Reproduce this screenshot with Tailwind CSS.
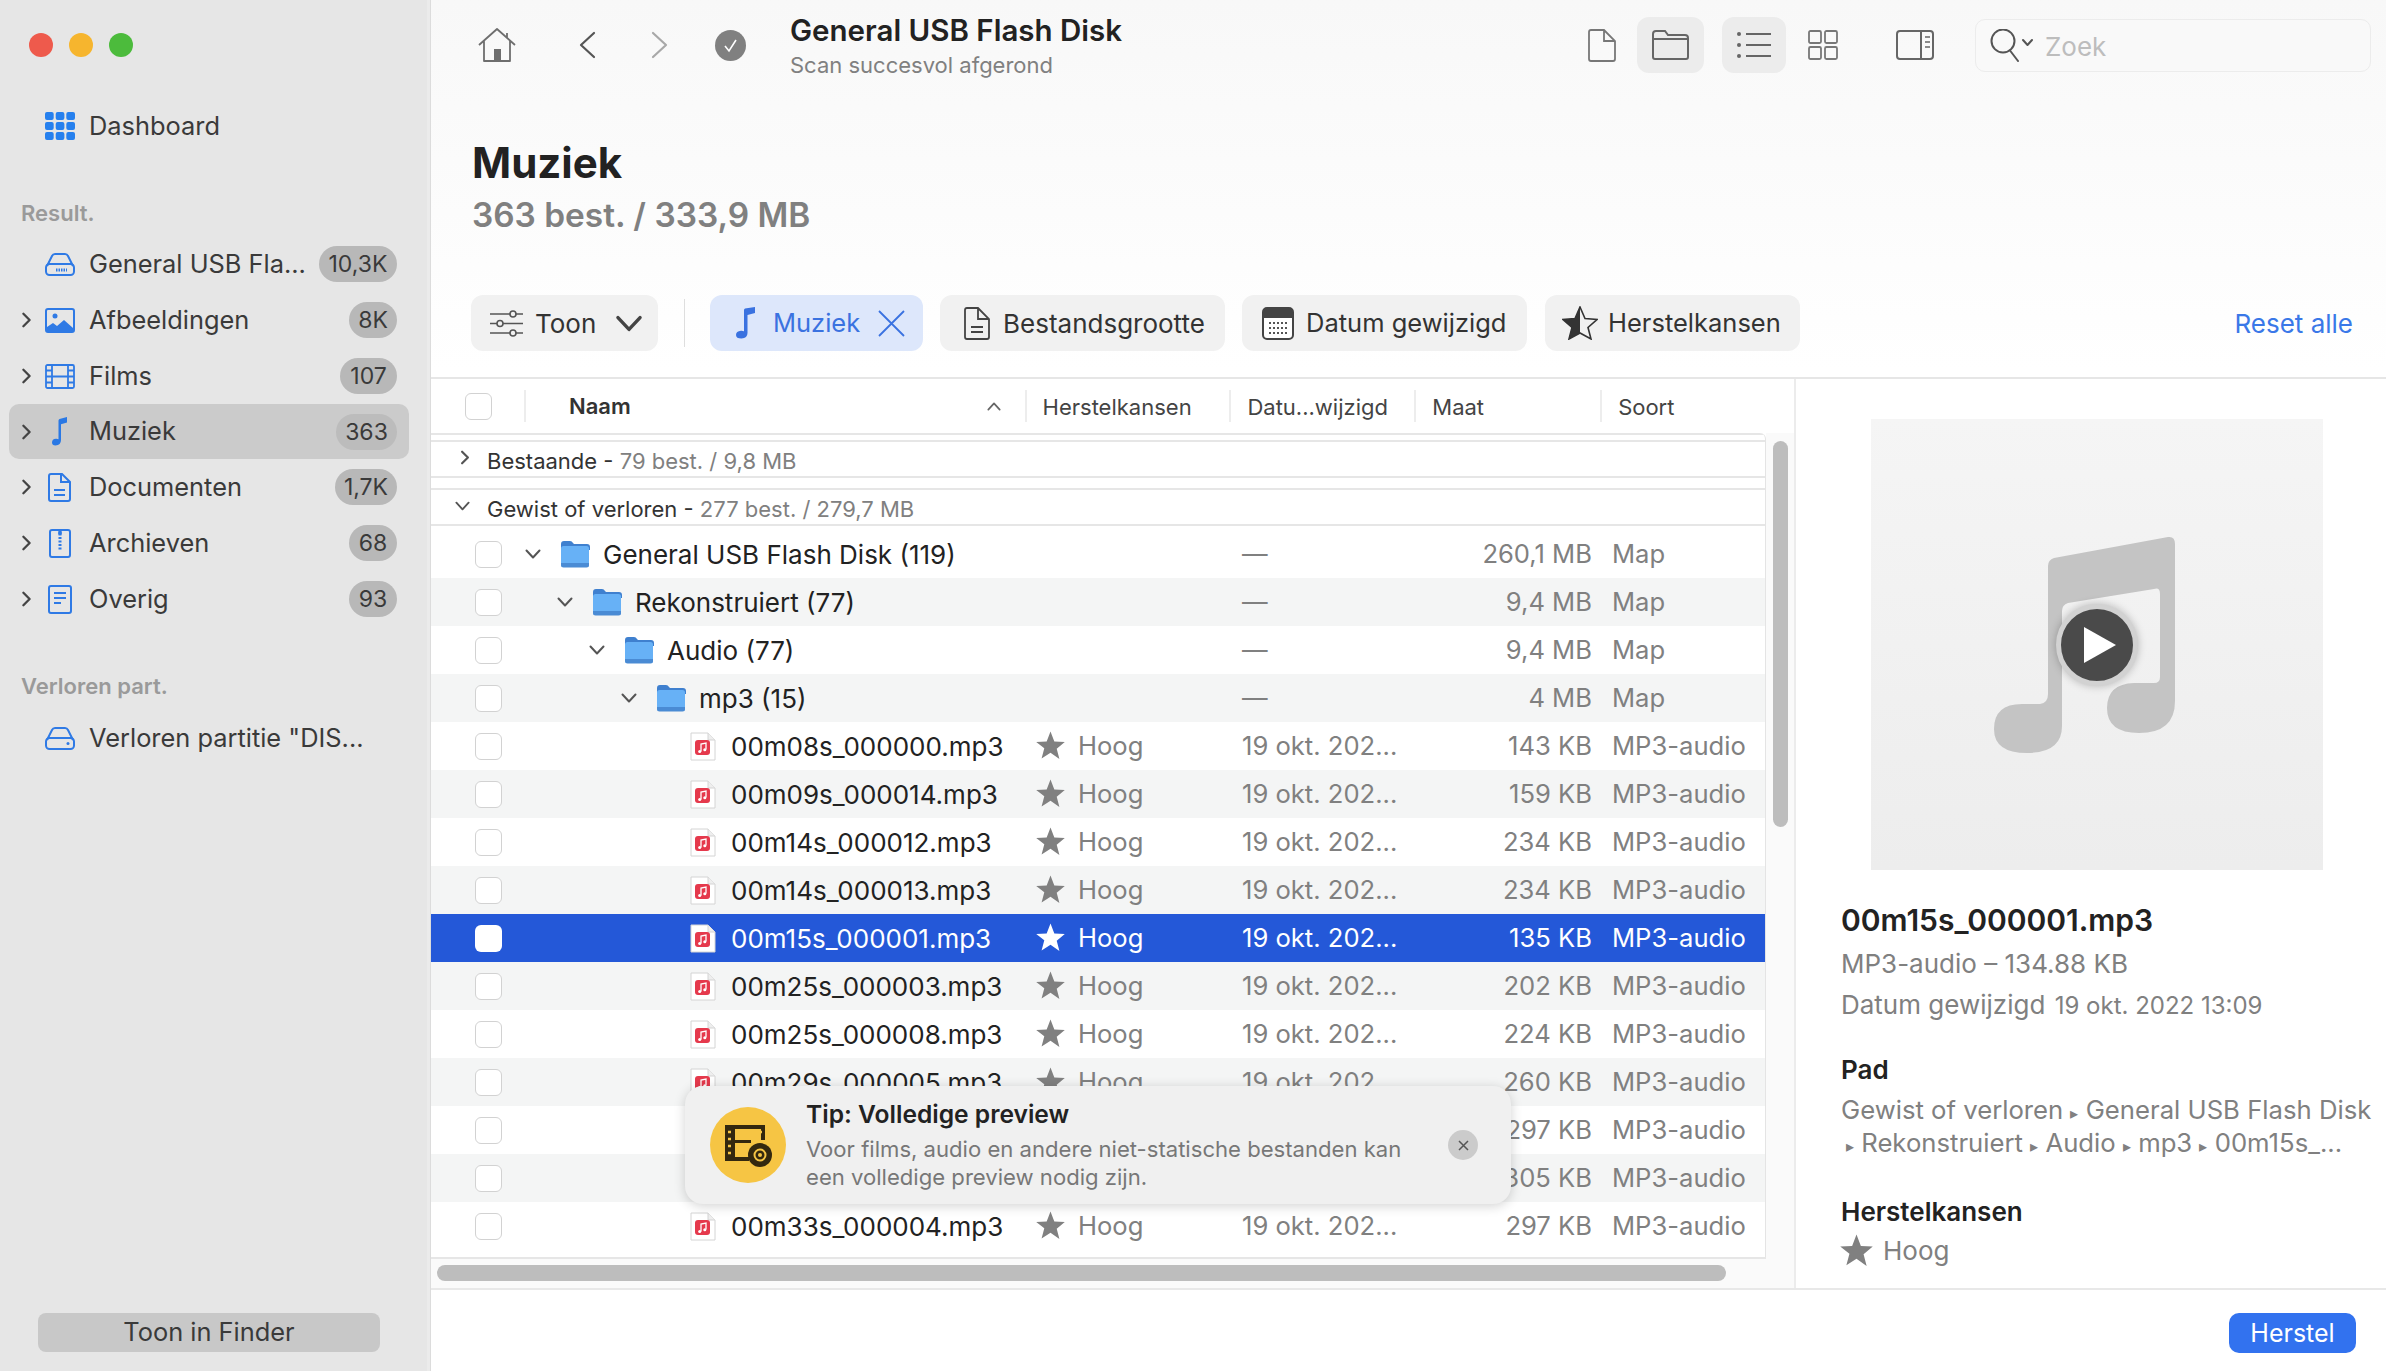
<!DOCTYPE html>
<html lang="nl">
<head>
    <meta charset="UTF-8">
    <title>Muziek - General USB Flash Disk</title>
    <script src="https://cdn.jsdelivr.net/npm/@tailwindcss/browser@4"></script>
</head>
<body class="[font-family:Inter,'Noto_Sans',sans-serif] text-[#222] bg-white overflow-hidden">

<!-- shared icons -->
<svg class="hidden">
    <symbol id="chev-r" viewBox="0 0 12 18"><path d="M2.5 2l7 7-7 7" fill="none" stroke="currentColor" stroke-width="2.600" stroke-linecap="round" stroke-linejoin="round"/></symbol>
    <symbol id="chev-d" viewBox="0 0 16 10"><path d="M1.5 1.5L8 8.5l6.500-7" fill="none" stroke="currentColor" stroke-width="2" stroke-linecap="round" stroke-linejoin="round"/></symbol>
    <symbol id="star" viewBox="0 0 28 28"><path d="M14 0.500l3.700 9.600 10.100.600-7.800 6.500 2.600 9.900L14 21.100l-8.600 5.500 2.600-9.900L.2 10.700l10.100-.6z" fill="currentColor"/></symbol>
    <symbol id="folder" viewBox="0 0 30 28"><path d="M1 4q0-3 3-3h6q2 0 3 2l1 1h13q3 0 3 3v3H1z" fill="#3f80cf"/><rect x="1" y="6" width="28" height="21" rx="2.500" fill="#67b1f6"/><path d="M1 23h28v2q0 2.500-2.500 2.500h-23q-2.500 0-2.500-2.500z" fill="#4a8bd4"/></symbol>
    <symbol id="file" viewBox="0 0 26 29"><path d="M1 1h17l7 7v20H1z" fill="#fff" stroke="#d4d4d4"/><path d="M18 1v7h7" fill="#eee" stroke="#d4d4d4"/><rect x="5" y="8" width="15" height="15" rx="3" fill="#e5394c"/><path d="M11 19.500v-7.500l5-1v6.500" fill="none" stroke="#fff" stroke-width="1.300"/><circle cx="9.700" cy="19.500" r="1.500" fill="#fff"/><circle cx="14.800" cy="17.700" r="1.500" fill="#fff"/></symbol>
</svg>

<div class="flex w-[2386px] h-[1371px] overflow-hidden">

    <!-- Sidebar -->
    <aside class="w-[430px] shrink-0 bg-[#e6e6e6] border-r-[3px] border-[#ebebeb] flex flex-col text-[25.4px] text-[#3a3a3a]">
        <div class="flex gap-[16px] pl-[29px] pt-[33px] h-[98px]">
            <span class="w-[24px] h-[24px] rounded-full bg-[#ee5a4c]"></span>
            <span class="w-[24px] h-[24px] rounded-full bg-[#f6b52e]"></span>
            <span class="w-[24px] h-[24px] rounded-full bg-[#4cbb3c]"></span>
        </div>
        <div class="flex items-center h-[56px] pl-[45px]">
            <svg class="w-[30px] h-[28px] mr-[14px]" viewBox="0 0 30 28" fill="#2680ee"><rect width="8.700" height="8" rx="2"/><rect x="10.700" width="8.700" height="8" rx="2"/><rect x="21.300" width="8.700" height="8" rx="2"/><rect y="10" width="8.700" height="8" rx="2"/><rect x="10.700" y="10" width="8.700" height="8" rx="2"/><rect x="21.300" y="10" width="8.700" height="8" rx="2"/><rect y="20" width="8.700" height="8" rx="2"/><rect x="10.700" y="20" width="8.700" height="8" rx="2"/><rect x="21.300" y="20" width="8.700" height="8" rx="2"/></svg>
            Dashboard
        </div>

        <div class="pl-[21px] mt-[41px] h-[36px] leading-[36px] text-[22px] font-semibold text-[#9a9a9a]">Result.</div>

        <div class="mt-[5px] flex flex-col">
            <div class="flex items-center h-[56px] pl-[45px] pr-[30px]">
                <svg class="w-[30px] h-[23px] mr-[14px]" viewBox="0 0 30 23" fill="none" stroke="#2f7ae5" stroke-width="2"><path d="M2 13L7 3q1-2 3-2h10q2 0 3 2l5 10"/><rect x="1" y="11" width="28" height="11" rx="3.500"/><path d="M11 17h11" stroke-width="3" stroke-dasharray="1.500 1"/></svg>
                <span>General USB Fla...</span>
                <span class="ml-auto h-[36px] w-[78px] rounded-full bg-[#b8b8b8] text-[23px] leading-[36px] text-center">10,3K</span>
            </div>
            <div class="flex items-center h-[56px] pl-[21px] pr-[30px]">
                <svg class="w-[11px] h-[16px] mr-[13px] text-[#444]"><use href="#chev-r"/></svg>
                <svg class="w-[30px] h-[25px] mr-[14px]" viewBox="0 0 30 25" fill="none" stroke="#2f7ae5" stroke-width="2"><rect x="1" y="1" width="28" height="23" rx="2"/><circle cx="10" cy="8" r="2.500" fill="#2f7ae5" stroke="none"/><path d="M2 23v-4l6-4 4 3 7-6 9 8v3z" fill="#2f7ae5" stroke="none"/></svg>
                <span>Afbeeldingen</span>
                <span class="ml-auto h-[36px] w-[48px] rounded-full bg-[#b8b8b8] text-[23px] leading-[36px] text-center">8K</span>
            </div>
            <div class="flex items-center h-[56px] pl-[21px] pr-[30px]">
                <svg class="w-[11px] h-[16px] mr-[13px] text-[#444]"><use href="#chev-r"/></svg>
                <svg class="w-[30px] h-[25px] mr-[14px]" viewBox="0 0 30 25" fill="none" stroke="#2f7ae5" stroke-width="1.800"><rect x="1" y="1" width="28" height="23" rx="1.500"/><path d="M7 1v23M23 1v23M1 6.500h6M1 12.500h28M1 18.500h6M23 6.500h6M23 18.500h6"/></svg>
                <span>Films</span>
                <span class="ml-auto h-[36px] w-[57px] rounded-full bg-[#b8b8b8] text-[23px] leading-[36px] text-center">107</span>
            </div>
            <div class="flex items-center h-[55px] ml-[9px] mr-[18px] pl-[12px] pr-[12px] rounded-[10px] bg-[#cbcbcb]">
                <svg class="w-[11px] h-[16px] mr-[13px] text-[#444]"><use href="#chev-r"/></svg>
                <svg class="w-[30px] h-[29px] mr-[14px]" viewBox="0 0 30 29" fill="#2a78e4"><path d="M13.500 3.500q0-1 1-1.500L22 0v5.500l-6 1.700V23q0 5-5.500 5.500Q7 28.500 7 25.500q0-3.500 4-3.700 1.500-.1 2.500.4z"/></svg>
                <span>Muziek</span>
                <span class="ml-auto h-[36px] w-[61px] rounded-full bg-[#bcbcbc] text-[23px] leading-[36px] text-center">363</span>
            </div>
            <div class="flex items-center h-[56px] pl-[21px] pr-[30px]">
                <svg class="w-[11px] h-[16px] mr-[13px] text-[#444]"><use href="#chev-r"/></svg>
                <svg class="w-[30px] h-[29px] mr-[14px]" viewBox="0 0 30 29" fill="none" stroke="#2f7ae5" stroke-width="2"><path d="M6 1h11l8 8v17q0 2-2 2H6q-2 0-2-2V3q0-2 2-2zM16 1v8h9M9 17h11M9 22h11"/></svg>
                <span>Documenten</span>
                <span class="ml-auto h-[36px] w-[62px] rounded-full bg-[#b8b8b8] text-[23px] leading-[36px] text-center">1,7K</span>
            </div>
            <div class="flex items-center h-[56px] pl-[21px] pr-[30px]">
                <svg class="w-[11px] h-[16px] mr-[13px] text-[#444]"><use href="#chev-r"/></svg>
                <svg class="w-[30px] h-[29px] mr-[14px]" viewBox="0 0 30 29" fill="none" stroke="#2f7ae5" stroke-width="2"><rect x="5" y="1" width="20" height="27" rx="2"/><path d="M15 1v21" stroke-width="3" stroke-dasharray="2 1.500"/><circle cx="15" cy="4" r="2" fill="#2f7ae5" stroke="none"/></svg>
                <span>Archieven</span>
                <span class="ml-auto h-[36px] w-[48px] rounded-full bg-[#b8b8b8] text-[23px] leading-[36px] text-center">68</span>
            </div>
            <div class="flex items-center h-[56px] pl-[21px] pr-[30px]">
                <svg class="w-[11px] h-[16px] mr-[13px] text-[#444]"><use href="#chev-r"/></svg>
                <svg class="w-[30px] h-[29px] mr-[14px]" viewBox="0 0 30 29" fill="none" stroke="#2f7ae5" stroke-width="2"><rect x="4" y="1" width="22" height="27" rx="2"/><path d="M9 8h12M9 13h12M9 18h7"/></svg>
                <span>Overig</span>
                <span class="ml-auto h-[36px] w-[48px] rounded-full bg-[#b8b8b8] text-[23px] leading-[36px] text-center">93</span>
            </div>
        </div>

        <div class="pl-[21px] mt-[41px] h-[36px] leading-[36px] text-[22px] font-semibold text-[#9a9a9a]">Verloren part.</div>
        <div class="flex items-center h-[56px] pl-[45px] mt-[6px]">
            <svg class="w-[30px] h-[23px] mr-[14px]" viewBox="0 0 30 23" fill="none" stroke="#2f7ae5" stroke-width="2"><path d="M2 13L7 3q1-2 3-2h10q2 0 3 2l5 10"/><rect x="1" y="11" width="28" height="11" rx="3.500"/><circle cx="23" cy="16.500" r="1.500" fill="#2f7ae5" stroke="none"/></svg>
            <span>Verloren partitie "DIS...</span>
        </div>

        <div class="mt-auto mb-[19px] ml-[38px] w-[342px] h-[39px] rounded-[8px] bg-[#c8c8c8] text-center text-[25.4px] leading-[38px]">Toon in Finder</div>
    </aside>

    <!-- Main -->
    <main class="flex-1 flex flex-col border-l border-[#dcdcdc] bg-gradient-to-b from-[#f8f8f8] to-white to-[27%] relative">

        <!-- Toolbar -->
        <div class="flex items-center h-[90px] shrink-0 text-[#6e6e6e]">
            <svg class="ml-[47px] w-[38px] h-[34px]" viewBox="0 0 38 34" fill="none" stroke="currentColor" stroke-width="1.800" stroke-linejoin="round"><path d="M1 17L19 1l18 16M6 13v20h26V13M29 5v5"/><rect x="16" y="21" width="7" height="12" fill="currentColor" stroke="none"/></svg>
            <svg class="ml-[62px] w-[18px] h-[28px]" viewBox="0 0 18 28" fill="none" stroke="#555" stroke-width="2.200" stroke-linecap="round" stroke-linejoin="round"><path d="M16 2L3 14l13 12"/></svg>
            <svg class="ml-[55px] w-[18px] h-[28px]" viewBox="0 0 18 28" fill="none" stroke="#a8a8a8" stroke-width="2.200" stroke-linecap="round" stroke-linejoin="round"><path d="M2 2l13 12L2 26"/></svg>
            <svg class="ml-[46px] w-[31px] h-[31px]" viewBox="0 0 31 31"><circle cx="15.500" cy="15.500" r="15.500" fill="#808080"/><path d="M10 16l4 5 7-11" fill="none" stroke="#fff" stroke-width="1.600"/></svg>
            <div class="ml-[44px] flex flex-col">
                <div class="text-[29.5px] font-semibold leading-[36px] text-[#222]">General USB Flash Disk</div>
                <div class="text-[22px] leading-[28px] text-[#808080] mt-[3px]">Scan succesvol afgerond</div>
            </div>

            <svg class="ml-auto w-[28px] h-[33px]" viewBox="0 0 28 33" fill="none" stroke="#777" stroke-width="1.800"><path d="M3 1h13l11 11v18q0 2-2 2H3q-2 0-2-2V3q0-2 2-2zM16 1v11h11"/></svg>
            <div class="ml-[21px] w-[67px] h-[56px] rounded-[12px] bg-[#ececec] flex items-center justify-center">
                <svg class="w-[37px] h-[30px]" viewBox="0 0 37 30" fill="none" stroke="#666" stroke-width="2"><path d="M1 9V4q0-3 3-3h9l3 4h17q3 0 3 3v19q0 2-2 2H3q-2 0-2-2V9h35"/></svg>
            </div>
            <div class="ml-[18px] w-[64px] h-[56px] rounded-[12px] bg-[#ececec] flex items-center justify-center">
                <svg class="w-[34px] h-[28px]" viewBox="0 0 34 28" fill="#666"><circle cx="2" cy="3" r="2"/><circle cx="2" cy="14" r="2"/><circle cx="2" cy="25" r="2"/><rect x="9" y="2" width="25" height="2"/><rect x="9" y="13" width="25" height="2"/><rect x="9" y="24" width="25" height="2"/></svg>
            </div>
            <svg class="ml-[22px] w-[30px] h-[30px]" viewBox="0 0 30 30" fill="none" stroke="#777" stroke-width="1.800"><rect x="1" y="1" width="12" height="12" rx="1.500"/><rect x="17" y="1" width="12" height="12" rx="1.500"/><rect x="1" y="17" width="12" height="12" rx="1.500"/><rect x="17" y="17" width="12" height="12" rx="1.500"/></svg>
            <svg class="ml-[58px] w-[38px] h-[30px]" viewBox="0 0 38 30" fill="none" stroke="#666" stroke-width="2"><rect x="1" y="1" width="36" height="28" rx="3"/><path d="M25 1v28" /><path d="M29 7h5M29 12h5M29 17h5" stroke-width="1.500"/></svg>
            <div class="ml-[41px] mr-[15px] w-[396px] h-[53px] rounded-[10px] border border-[#ececec] bg-[#f9f9f9] flex items-center pl-[14px]">
                <svg class="w-[46px] h-[33px]" viewBox="0 0 46 33" fill="none" stroke="#555" stroke-width="2" stroke-linecap="round" stroke-linejoin="round"><circle cx="13" cy="12" r="11.500"/><path d="M20 21.500l8 10.500M33 11l4.500 5 4.500-5"/></svg>
                <span class="ml-[9px] mt-[2px] text-[26px] text-[#bdbdbd]">Zoek</span>
            </div>
        </div>

        <!-- Heading -->
        <h1 class="ml-[41px] mt-[48px] text-[42px] leading-[50px] font-bold text-[#222]">Muziek</h1>
        <div class="ml-[41px] mt-[7px] text-[33.400px] leading-[40px] font-semibold text-[#808080]">363 best. / 333,9 MB</div>

        <!-- Filter bar -->
        <div class="flex items-center h-[56px] mt-[60px] mb-[26px] text-[26px] text-[#333] shrink-0">
            <div class="ml-[40px] w-[187px] h-full rounded-[12px] bg-[#f1f1f1] flex items-center pl-[19px]">
                <svg class="w-[33px] h-[27px]" viewBox="0 0 33 27" fill="none" stroke="#555" stroke-width="1.600"><path d="M0 4h20M26 4h7M0 13.500h7M13 13.500h20M0 23h20M26 23h7"/><circle cx="23" cy="4" r="3"/><circle cx="10" cy="13.500" r="3"/><circle cx="23" cy="23" r="3"/></svg>
                <span class="ml-[12px]">Toon</span>
                <svg class="ml-[19px] w-[28px] h-[17px] text-[#444]"><use href="#chev-d"/></svg>
            </div>
            <span class="ml-[26px] w-px h-[48px] bg-[#dedede]"></span>
            <div class="ml-[25px] w-[213px] h-full rounded-[12px] bg-[#dde7fb] text-[#3a72e0] flex items-center pl-[25px]">
                <svg class="w-[22px] h-[32px]" viewBox="0 0 22 32" fill="#3a72e0"><path d="M9 3q0-1 1-1.500L20 0v6l-7.500 2v18q0 5-6 5.500Q1 31.500 1 28q0-4 5-4.300 1.500-.1 3 .5z"/></svg>
                <span class="ml-[16px] text-[25.500px]">Muziek</span>
                <svg class="ml-[18px] w-[27px] h-[27px]" viewBox="0 0 27 27" fill="none" stroke="#3a72e0" stroke-width="1.800"><path d="M1 1l25 25M26 1L1 26"/></svg>
            </div>
            <div class="ml-[17px] w-[285px] h-full rounded-[12px] bg-[#f1f1f1] flex items-center pl-[24px]">
                <svg class="w-[26px] h-[33px]" viewBox="0 0 26 33" fill="none" stroke="#444" stroke-width="1.800"><path d="M3 1h11l11 11v18q0 2-2 2H3q-2 0-2-2V3q0-2 2-2zM14 1v11h11M7 20h12M7 25h12"/></svg>
                <span class="ml-[13px]">Bestandsgrootte</span>
            </div>
            <div class="ml-[17px] w-[285px] h-full rounded-[12px] bg-[#f1f1f1] flex items-center pl-[20px]">
                <svg class="w-[32px] h-[33px]" viewBox="0 0 32 33"><rect x="1" y="1" width="30" height="31" rx="4" fill="#fff" stroke="#444" stroke-width="2"/><path d="M1 5q0-4 4-4h22q4 0 4 4v6H1z" fill="#444"/><path d="M7 16h18M7 21h18M7 26h18" stroke="#555" stroke-width="2" stroke-dasharray="2 2" fill="none"/></svg>
                <span class="ml-[12px] text-[25.500px]">Datum gewijzigd</span>
            </div>
            <div class="ml-[18px] w-[255px] h-full rounded-[12px] bg-[#f1f1f1] flex items-center pl-[17px]">
                <svg class="w-[36px] h-[34px]" viewBox="0 0 36 34"><path d="M18 1l5 11.500 12 1-9 8 3 11.500-11-6-11 6 3-11.500-9-8 12-1z" fill="none" stroke="#333" stroke-width="1.600"/><path d="M18 1v26l-11 6 3-11.500-9-8 12-1z" fill="#333"/></svg>
                <span class="ml-[10px] text-[25.500px]">Herstelkansen</span>
            </div>
            <span class="ml-auto mr-[33px] text-[#3a78e8]">Reset alle</span>
        </div>

        <div class="flex-1 min-h-0 flex border-t-2 border-[#e6e6e6]">

            <!-- File list -->
            <section class="w-[1365px] shrink-0 flex flex-col border-r-2 border-[#ececec] relative">
                <!-- Column headers -->
                <div class="flex items-center h-[54px] shrink-0 text-[22px] text-[#444]">
                    <div class="w-[93px] flex items-center">
                        <span class="ml-[34px] w-[27px] h-[27px] rounded-[6px] border border-[#d2d2d2] bg-white"></span>
                    </div>
                    <div class="w-[501px] h-[32px] border-l-2 border-[#ededed] flex items-center justify-between pl-[43px] pr-[24px]">
                        <span class="font-semibold text-[#333]">Naam</span>
                        <svg class="w-[14px] h-[9px] text-[#666] rotate-180"><use href="#chev-d"/></svg>
                    </div>
                    <div class="w-[205px] h-[32px] border-l-2 border-[#ededed] pl-[16px] leading-[34px]">Herstelkansen</div>
                    <div class="w-[185px] h-[32px] border-l-2 border-[#ededed] pl-[16px] leading-[34px]">Datu...wijzigd</div>
                    <div class="w-[186px] h-[32px] border-l-2 border-[#ededed] pl-[16px] leading-[34px]">Maat</div>
                    <div class="w-[194px] h-[32px] border-l-2 border-[#ededed] pl-[16px] leading-[34px]">Soort</div>
                </div>

                <div class="flex-1 min-h-0 flex">
                    <div class="w-[1335px] shrink-0 flex flex-col">
                        <div class="h-[824px] shrink-0 border-r border-[#e4e4e4] rounded-tr-[6px] flex flex-col text-[25.600px] overflow-hidden">
                            <!-- Groups -->
                            <div class="h-[7px] shrink-0 border-t-2 border-[#e6e6e6]"></div>
                            <div class="flex items-center h-[38px] shrink-0 border-y-2 border-[#e6e6e6] pt-[4px] text-[22px] text-[#333]">
                                <svg class="ml-[29px] w-[10px] h-[15px] text-[#555] -mt-[8px]"><use href="#chev-r"/></svg>
                                <span class="ml-[17px]">Bestaande - <span class="text-[#808080]">79 best. / 9,8 MB</span></span>
                            </div>
                            <div class="h-[10px] shrink-0"></div>
                            <div class="flex items-center h-[38px] shrink-0 border-y-2 border-[#e6e6e6] pt-[4px] text-[22px] text-[#333]">
                                <svg class="ml-[24px] w-[15px] h-[10px] text-[#555] -mt-[6px]"><use href="#chev-d"/></svg>
                                <span class="ml-[17px]">Gewist of verloren - <span class="text-[#808080]">277 best. / 279,7 MB</span></span>
                            </div>
                            <div class="h-[4px] shrink-0"></div>

                            <!-- Rows -->
                            <div class="flex items-center h-[48px] shrink-0 text-[#808080]">
                                <div class="w-[606px] flex items-center text-[26px] text-[#222]">
                                    <span class="ml-[44px] w-[27px] h-[27px] rounded-[6px] border border-[#d2d2d2] bg-white shrink-0"></span>
                                    <svg class="ml-[23px] w-[16px] h-[10px] text-[#555]"><use href="#chev-d"/></svg>
                                    <svg class="ml-[19px] w-[30px] h-[28px]"><use href="#folder"/></svg>
                                    <span class="ml-[13px]">General USB Flash Disk (119)</span>
                                </div>
                                <div class="w-[205px]"></div>
                                <div class="w-[200px]">—</div>
                                <div class="w-[150px] text-right">260,1 MB</div>
                                <div class="ml-[20px]">Map</div>
                            </div>
                            <div class="flex items-center h-[48px] shrink-0 text-[#808080] bg-[#f4f5f5]">
                                <div class="w-[606px] flex items-center text-[26px] text-[#222]">
                                    <span class="ml-[44px] w-[27px] h-[27px] rounded-[6px] border border-[#d2d2d2] bg-white shrink-0"></span>
                                    <svg class="ml-[55px] w-[16px] h-[10px] text-[#555]"><use href="#chev-d"/></svg>
                                    <svg class="ml-[19px] w-[30px] h-[28px]"><use href="#folder"/></svg>
                                    <span class="ml-[13px]">Rekonstruiert (77)</span>
                                </div>
                                <div class="w-[205px]"></div>
                                <div class="w-[200px]">—</div>
                                <div class="w-[150px] text-right">9,4 MB</div>
                                <div class="ml-[20px]">Map</div>
                            </div>
                            <div class="flex items-center h-[48px] shrink-0 text-[#808080]">
                                <div class="w-[606px] flex items-center text-[26px] text-[#222]">
                                    <span class="ml-[44px] w-[27px] h-[27px] rounded-[6px] border border-[#d2d2d2] bg-white shrink-0"></span>
                                    <svg class="ml-[87px] w-[16px] h-[10px] text-[#555]"><use href="#chev-d"/></svg>
                                    <svg class="ml-[19px] w-[30px] h-[28px]"><use href="#folder"/></svg>
                                    <span class="ml-[13px]">Audio (77)</span>
                                </div>
                                <div class="w-[205px]"></div>
                                <div class="w-[200px]">—</div>
                                <div class="w-[150px] text-right">9,4 MB</div>
                                <div class="ml-[20px]">Map</div>
                            </div>
                            <div class="flex items-center h-[48px] shrink-0 text-[#808080] bg-[#f4f5f5]">
                                <div class="w-[606px] flex items-center text-[26px] text-[#222]">
                                    <span class="ml-[44px] w-[27px] h-[27px] rounded-[6px] border border-[#d2d2d2] bg-white shrink-0"></span>
                                    <svg class="ml-[119px] w-[16px] h-[10px] text-[#555]"><use href="#chev-d"/></svg>
                                    <svg class="ml-[19px] w-[30px] h-[28px]"><use href="#folder"/></svg>
                                    <span class="ml-[13px]">mp3 (15)</span>
                                </div>
                                <div class="w-[205px]"></div>
                                <div class="w-[200px]">—</div>
                                <div class="w-[150px] text-right">4 MB</div>
                                <div class="ml-[20px]">Map</div>
                            </div>
                            <div class="flex items-center h-[48px] shrink-0 text-[#808080]">
                                <div class="w-[606px] flex items-center text-[26px] text-[#222]">
                                    <span class="ml-[44px] w-[27px] h-[27px] rounded-[6px] border border-[#d2d2d2] bg-white shrink-0"></span>
                                    <svg class="ml-[188px] w-[26px] h-[29px]"><use href="#file"/></svg>
                                    <span class="ml-[15px]">00m08s_000000.mp3</span>
                                </div>
                                <div class="w-[205px] flex items-center"><svg class="w-[29px] h-[29px] -ml-[1px]"><use href="#star"/></svg><span class="ml-[13px]">Hoog</span></div>
                                <div class="w-[200px]">19 okt. 202...</div>
                                <div class="w-[150px] text-right">143 KB</div>
                                <div class="ml-[20px]">MP3-audio</div>
                            </div>
                            <div class="flex items-center h-[48px] shrink-0 text-[#808080] bg-[#f4f5f5]">
                                <div class="w-[606px] flex items-center text-[26px] text-[#222]">
                                    <span class="ml-[44px] w-[27px] h-[27px] rounded-[6px] border border-[#d2d2d2] bg-white shrink-0"></span>
                                    <svg class="ml-[188px] w-[26px] h-[29px]"><use href="#file"/></svg>
                                    <span class="ml-[15px]">00m09s_000014.mp3</span>
                                </div>
                                <div class="w-[205px] flex items-center"><svg class="w-[29px] h-[29px] -ml-[1px]"><use href="#star"/></svg><span class="ml-[13px]">Hoog</span></div>
                                <div class="w-[200px]">19 okt. 202...</div>
                                <div class="w-[150px] text-right">159 KB</div>
                                <div class="ml-[20px]">MP3-audio</div>
                            </div>
                            <div class="flex items-center h-[48px] shrink-0 text-[#808080]">
                                <div class="w-[606px] flex items-center text-[26px] text-[#222]">
                                    <span class="ml-[44px] w-[27px] h-[27px] rounded-[6px] border border-[#d2d2d2] bg-white shrink-0"></span>
                                    <svg class="ml-[188px] w-[26px] h-[29px]"><use href="#file"/></svg>
                                    <span class="ml-[15px]">00m14s_000012.mp3</span>
                                </div>
                                <div class="w-[205px] flex items-center"><svg class="w-[29px] h-[29px] -ml-[1px]"><use href="#star"/></svg><span class="ml-[13px]">Hoog</span></div>
                                <div class="w-[200px]">19 okt. 202...</div>
                                <div class="w-[150px] text-right">234 KB</div>
                                <div class="ml-[20px]">MP3-audio</div>
                            </div>
                            <div class="flex items-center h-[48px] shrink-0 text-[#808080] bg-[#f4f5f5]">
                                <div class="w-[606px] flex items-center text-[26px] text-[#222]">
                                    <span class="ml-[44px] w-[27px] h-[27px] rounded-[6px] border border-[#d2d2d2] bg-white shrink-0"></span>
                                    <svg class="ml-[188px] w-[26px] h-[29px]"><use href="#file"/></svg>
                                    <span class="ml-[15px]">00m14s_000013.mp3</span>
                                </div>
                                <div class="w-[205px] flex items-center"><svg class="w-[29px] h-[29px] -ml-[1px]"><use href="#star"/></svg><span class="ml-[13px]">Hoog</span></div>
                                <div class="w-[200px]">19 okt. 202...</div>
                                <div class="w-[150px] text-right">234 KB</div>
                                <div class="ml-[20px]">MP3-audio</div>
                            </div>
                            <!-- selected row -->
                            <div class="flex items-center h-[48px] shrink-0 text-white bg-[#2458d8]">
                                <div class="w-[606px] flex items-center text-[26px]">
                                    <span class="ml-[44px] w-[27px] h-[27px] rounded-[6px] bg-white shrink-0"></span>
                                    <svg class="ml-[188px] w-[26px] h-[29px]"><use href="#file"/></svg>
                                    <span class="ml-[15px]">00m15s_000001.mp3</span>
                                </div>
                                <div class="w-[205px] flex items-center"><svg class="w-[29px] h-[29px] -ml-[1px]"><use href="#star"/></svg><span class="ml-[13px]">Hoog</span></div>
                                <div class="w-[200px]">19 okt. 202...</div>
                                <div class="w-[150px] text-right">135 KB</div>
                                <div class="ml-[20px]">MP3-audio</div>
                            </div>
                            <div class="flex items-center h-[48px] shrink-0 text-[#808080] bg-[#f4f5f5]">
                                <div class="w-[606px] flex items-center text-[26px] text-[#222]">
                                    <span class="ml-[44px] w-[27px] h-[27px] rounded-[6px] border border-[#d2d2d2] bg-white shrink-0"></span>
                                    <svg class="ml-[188px] w-[26px] h-[29px]"><use href="#file"/></svg>
                                    <span class="ml-[15px]">00m25s_000003.mp3</span>
                                </div>
                                <div class="w-[205px] flex items-center"><svg class="w-[29px] h-[29px] -ml-[1px]"><use href="#star"/></svg><span class="ml-[13px]">Hoog</span></div>
                                <div class="w-[200px]">19 okt. 202...</div>
                                <div class="w-[150px] text-right">202 KB</div>
                                <div class="ml-[20px]">MP3-audio</div>
                            </div>
                            <div class="flex items-center h-[48px] shrink-0 text-[#808080]">
                                <div class="w-[606px] flex items-center text-[26px] text-[#222]">
                                    <span class="ml-[44px] w-[27px] h-[27px] rounded-[6px] border border-[#d2d2d2] bg-white shrink-0"></span>
                                    <svg class="ml-[188px] w-[26px] h-[29px]"><use href="#file"/></svg>
                                    <span class="ml-[15px]">00m25s_000008.mp3</span>
                                </div>
                                <div class="w-[205px] flex items-center"><svg class="w-[29px] h-[29px] -ml-[1px]"><use href="#star"/></svg><span class="ml-[13px]">Hoog</span></div>
                                <div class="w-[200px]">19 okt. 202...</div>
                                <div class="w-[150px] text-right">224 KB</div>
                                <div class="ml-[20px]">MP3-audio</div>
                            </div>
                            <div class="flex items-center h-[48px] shrink-0 text-[#808080] bg-[#f4f5f5]">
                                <div class="w-[606px] flex items-center text-[26px] text-[#222]">
                                    <span class="ml-[44px] w-[27px] h-[27px] rounded-[6px] border border-[#d2d2d2] bg-white shrink-0"></span>
                                    <svg class="ml-[188px] w-[26px] h-[29px]"><use href="#file"/></svg>
                                    <span class="ml-[15px]">00m29s_000005.mp3</span>
                                </div>
                                <div class="w-[205px] flex items-center"><svg class="w-[29px] h-[29px] -ml-[1px]"><use href="#star"/></svg><span class="ml-[13px]">Hoog</span></div>
                                <div class="w-[200px]">19 okt. 202...</div>
                                <div class="w-[150px] text-right">260 KB</div>
                                <div class="ml-[20px]">MP3-audio</div>
                            </div>
                            <div class="flex items-center h-[48px] shrink-0 text-[#808080]">
                                <div class="w-[606px] flex items-center text-[#222]">
                                    <span class="ml-[44px] w-[27px] h-[27px] rounded-[6px] border border-[#d2d2d2] bg-white shrink-0"></span>
                                </div>
                                <div class="w-[205px]"></div>
                                <div class="w-[200px]"></div>
                                <div class="w-[150px] text-right">297 KB</div>
                                <div class="ml-[20px]">MP3-audio</div>
                            </div>
                            <div class="flex items-center h-[48px] shrink-0 text-[#808080] bg-[#f4f5f5]">
                                <div class="w-[606px] flex items-center text-[#222]">
                                    <span class="ml-[44px] w-[27px] h-[27px] rounded-[6px] border border-[#d2d2d2] bg-white shrink-0"></span>
                                </div>
                                <div class="w-[205px]"></div>
                                <div class="w-[200px]"></div>
                                <div class="w-[150px] text-right">305 KB</div>
                                <div class="ml-[20px]">MP3-audio</div>
                            </div>
                            <div class="flex items-center h-[48px] shrink-0 text-[#808080]">
                                <div class="w-[606px] flex items-center text-[26px] text-[#222]">
                                    <span class="ml-[44px] w-[27px] h-[27px] rounded-[6px] border border-[#d2d2d2] bg-white shrink-0"></span>
                                    <svg class="ml-[188px] w-[26px] h-[29px]"><use href="#file"/></svg>
                                    <span class="ml-[15px]">00m33s_000004.mp3</span>
                                </div>
                                <div class="w-[205px] flex items-center"><svg class="w-[29px] h-[29px] -ml-[1px]"><use href="#star"/></svg><span class="ml-[13px]">Hoog</span></div>
                                <div class="w-[200px]">19 okt. 202...</div>
                                <div class="w-[150px] text-right">297 KB</div>
                                <div class="ml-[20px]">MP3-audio</div>
                            </div>
                        </div>
                        <!-- Horizontal scrollbar -->
                        <div class="flex-1 border-t-2 border-[#e6e6e6] bg-[#fafafa] pt-[6px] pl-[6px]">
                            <div class="w-[1289px] h-[16px] rounded-full bg-[#bdbdbd]"></div>
                        </div>
                    </div>
                    <!-- Vertical scrollbar -->
                    <div class="flex-1 bg-[#fafafa] pt-[8px] pl-[7px]">
                        <div class="w-[15px] h-[386px] rounded-full bg-[#bdbdbd]"></div>
                    </div>
                </div>

                <!-- Tip -->
                <div class="absolute left-[254px] top-[707px] w-[826px] h-[118px] rounded-[18px] bg-[#f0f0f0] shadow-[0_2px_12px_rgba(0,0,0,0.18)] flex items-center pl-[25px]">
                    <div class="w-[76px] h-[76px] rounded-full bg-[#f6c544] flex items-center justify-center shrink-0">
                        <svg class="w-[48px] h-[43px]" viewBox="0 0 48 43"><path d="M1 1h40v15h-4V5H11v28h14v4H1z" fill="#33280f"/><path d="M4 8h3M4 15h3M4 22h3M4 29h3M34 8h4" stroke="#f6c544" stroke-width="2.500" fill="none"/><path d="M11 16h16v3H11z" fill="#33280f"/><circle cx="36" cy="31" r="12" fill="#33280f"/><circle cx="36" cy="31" r="5.500" fill="none" stroke="#f6c544" stroke-width="2"/><circle cx="36" cy="31" r="2" fill="#f6c544"/></svg>
                    </div>
                    <div class="ml-[20px] w-[623px] shrink-0">
                        <div class="text-[24.600px] font-semibold text-[#222] leading-[30px]">Tip: Volledige preview</div>
                        <div class="text-[22.100px] text-[#777] leading-[28px] mt-[6px]">Voor films, audio en andere niet-statische bestanden kan<br>een volledige preview nodig zijn.</div>
                    </div>
                    <div class="ml-[19px] w-[30px] h-[30px] rounded-full bg-[#cbcbcb] flex items-center justify-center">
                        <svg class="w-[11px] h-[11px]" viewBox="0 0 11 11" fill="none" stroke="#555" stroke-width="1.500"><path d="M1 1l9 9M10 1l-9 9"/></svg>
                    </div>
                </div>
            </section>

            <!-- Detail panel -->
            <section class="flex-1 pl-[45px] pt-[40px] bg-white text-[26px] text-[#808080]">
                <div class="relative w-[452px] h-[451px] ml-[30px] bg-gradient-to-b from-[#f5f5f5] to-[#ededed] flex items-center justify-center">
                    <svg class="w-[181px] h-[217px] mr-[25px]" viewBox="0 0 181 217" fill="#c4c4c4"><path d="M54 30Q54 24 60 22L174 1Q181 0 181 8V165Q181 197 145 197Q113 197 113 172Q113 148 140 147L160 147Q166 147 166 141V58Q166 51 160 53L74 67Q68 69 68 75V190Q68 217 33 217Q0 217 0 193Q0 168 28 168L46 168Q54 167 54 158Z"/></svg>
                    <div class="absolute left-[185px] top-[185px] w-[82px] h-[82px] rounded-full bg-[#4a4a4a] border-[5px] border-[#d2d2d2] shadow-[0_0_8px_rgba(0,0,0,0.25)] flex items-center justify-center">
                        <svg class="w-[32px] h-[36px] ml-[5px]" viewBox="0 0 32 36" fill="#fff"><path d="M0 0l32 18L0 36z"/></svg>
                    </div>
                </div>
                <div class="mt-[31px] text-[30px] leading-[38px] font-semibold text-[#222]">00m15s_000001.mp3</div>
                <div class="mt-[8px] leading-[34px]">MP3-audio – 134.88 KB</div>
                <div class="mt-[7px] leading-[34px]">Datum gewijzigd <span class="text-[24px] ml-[2px]">19 okt. 2022 13:09</span></div>
                <div class="mt-[30px] leading-[34px] font-semibold text-[#222]">Pad</div>
                <div class="mt-[7px] text-[25.700px] whitespace-nowrap">
                    <div class="h-[32px] leading-[32px]">Gewist of verloren <span class="text-[16px] leading-none">▸</span> General USB Flash Disk</div>
                    <div class="h-[33px] leading-[33px]"><span class="ml-[5px] text-[16px] leading-none">▸</span> Rekonstruiert <span class="text-[16px] leading-none">▸</span> Audio <span class="text-[16px] leading-none">▸</span> mp3 <span class="text-[16px] leading-none">▸</span> 00m15s_...</div>
                </div>
                <div class="mt-[36px] leading-[34px] font-semibold text-[#222]">Herstelkansen</div>
                <div class="flex items-center mt-[4px] h-[34px]"><svg class="w-[33px] h-[33px] -ml-[1px]"><use href="#star"/></svg><span class="ml-[10px]">Hoog</span></div>
            </section>
        </div>

        <!-- Footer -->
        <div class="h-[83px] shrink-0 border-t-2 border-[#e8e8e8] bg-white flex justify-end items-start pt-[23px] pr-[30px]">
            <button class="w-[127px] h-[40px] rounded-[10px] bg-[#3272ef] text-white text-[25px] leading-[40px]">Herstel</button>
        </div>
    </main>
</div>
</body>
</html>
